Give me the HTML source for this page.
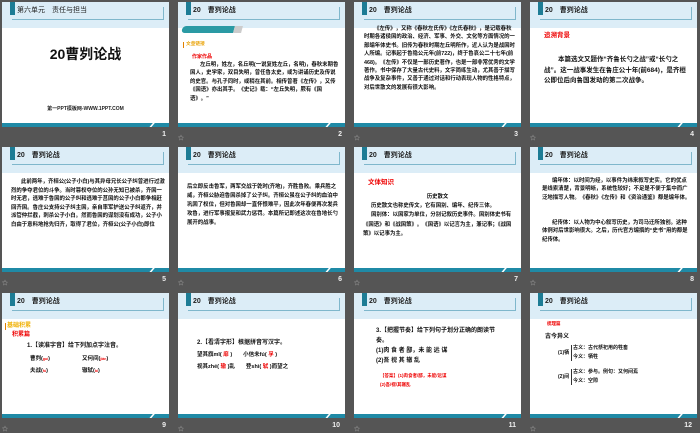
<!DOCTYPE html>
<html><head><meta charset="utf-8">
<style>
*{margin:0;padding:0;box-sizing:border-box}
body{width:700px;height:431px;background:#555;position:relative;overflow:hidden;font-family:"Liberation Sans","Noto Sans CJK SC",sans-serif}
.s{position:absolute;width:167px;height:125px;background:#fff;overflow:hidden}
.hd{position:absolute;left:0;top:0;width:167px;height:26px;background:#dcedf7}
.hl{position:absolute;left:10px;top:5px;width:152px;height:13px;border-bottom:1px solid #7fb7cc;border-right:1px solid #7fb7cc}
.sq{position:absolute;left:8px;top:0;width:5px;height:13px;background:#1d7c95}
.tt{position:absolute;left:15px;top:3px;font-size:7px;font-weight:bold;color:#222;white-space:nowrap}
.bb{position:absolute;left:0;top:121px;width:167px;height:4px;background:#1f8aa6}
.sl{position:absolute;left:150px;top:119px;width:2px;height:6px;background:#fff;transform:skewX(-40deg)}
.n{position:absolute;font-size:7px;color:#eee;font-weight:bold;text-align:right;width:20px}
.ic{position:absolute;font-size:6px;color:#bbb}
.p{position:absolute;font-size:5.4px;line-height:8.4px;color:#111;font-weight:bold;font-family:"Liberation Sans","Noto Sans CJK SC",sans-serif}
.red{color:#e00}
</style></head><body>

<!-- slide 1 -->
<div class="s" style="left:2px;top:2px">
<div class="hd"></div><div class="hl"></div><div class="sq"></div>
<div class="tt" style="font-weight:normal">第六单元　责任与担当</div>
<div style="position:absolute;left:0;width:167px;top:42px;text-align:center;font-size:14px;font-weight:bold;color:#111">20曹刿论战</div>
<div style="position:absolute;left:0;width:167px;top:103px;text-align:center;font-size:5px;font-weight:bold;color:#222">第一PPT模板网-WWW.1PPT.COM</div>
<div class="bb"></div><div class="sl"></div></div>
<div class="n" style="left:146px;top:131px">1</div>

<!-- slide 2 -->
<div class="s" style="left:178px;top:2px">
<div class="hd"></div><div class="hl"></div><div class="sq"></div><div class="tt">20　曹刿论战</div>
<div style="position:absolute;left:4px;top:24px;width:52px;height:7px;background:#2a9aa4;border-radius:4px 0 0 4px;transform:skewX(-15deg)"></div>
<div style="position:absolute;left:56px;top:24px;width:8px;height:7px;background:#ccc;transform:skewX(-15deg)"></div>
<div style="position:absolute;left:5px;top:40px;width:1px;height:6px;background:#e08000"></div>
<div class="p" style="left:8px;top:38px;color:#e8a000;font-size:4.7px">文章链接</div>
<div class="p red" style="left:14px;top:51px;font-size:5px">作家作品</div>
<div class="p" style="left:12px;top:59px;width:150px;text-indent:10px">左丘明，姓左，名丘明(一说复姓左丘，名明)，春秋末期鲁国人，史学家，双目失明，曾任鲁太史，或为讲诵历史及传说的史官。与孔子同时，或稍在其前。相传曾著《左传》，又传《国语》亦出其手。《史记》载：“左丘失明，厥有《国语》。”</div>
<div class="bb"></div><div class="sl"></div></div>
<div class="ic" style="left:178px;top:133px">☆</div><div class="n" style="left:322px;top:131px">2</div>

<!-- slide 3 -->
<div class="s" style="left:354px;top:2px">
<div class="hd"></div><div class="hl"></div><div class="sq"></div><div class="tt">20　曹刿论战</div>
<div class="p" style="left:10px;top:23px;width:152px;text-indent:10px">《左传》，又称《春秋左氏传》《左氏春秋》，是记载春秋时期各诸侯国的政治、经济、军事、外交、文化等方面情况的一部编年体史书。旧传为春秋时期左丘明所作，近人认为是战国时人所编。记事起于鲁隐公元年(前722)，终于鲁哀公二十七年(前468)。《左传》不仅是一部历史著作，也是一部非常优秀的文学著作。书中保存了大量古代史料，文字简练生动，尤其善于描写战争及复杂事件，又善于通过对话和行动表现人物的性格特点，对后世散文的发展有很大影响。</div>
<div class="bb"></div><div class="sl"></div></div>
<div class="ic" style="left:354px;top:133px">☆</div><div class="n" style="left:498px;top:131px">3</div>

<!-- slide 4 -->
<div class="s" style="left:530px;top:2px">
<div class="hd"></div><div class="hl"></div><div class="sq"></div><div class="tt">20　曹刿论战</div>
<div class="p red" style="left:14px;top:30px;font-size:6.5px">追溯背景</div>
<div class="p" style="left:14px;top:53px;width:142px;font-size:6.5px;line-height:10.5px;text-indent:14px">本篇选文又题作“齐鲁长勺之战”或“长勺之战”。这一战事发生在鲁庄公十年(前684)，是齐桓公即位后向鲁国发动的第二次战争。</div>
<div class="bb"></div><div class="sl"></div></div>
<div class="ic" style="left:530px;top:133px">☆</div><div class="n" style="left:674px;top:131px">4</div>

<!-- slide 5 -->
<div class="s" style="left:2px;top:147px">
<div class="hd"></div><div class="hl"></div><div class="sq"></div><div class="tt">20　曹刿论战</div>
<div class="p" style="left:9px;top:31px;width:154px;text-indent:10px;line-height:8.6px">此前两年，齐桓公(公子小白)与其异母兄长公子纠曾进行过激烈的争夺君位的斗争。当时篡权夺位的公孙无知已被杀，齐国一时无君，逃难于鲁国的公子纠和逃难于莒国的公子小白都争相赶回齐国。鲁庄公支持公子纠主国，亲自率军护送公子纠返齐，并派管仲拦截，刺杀公子小白。然而鲁国的谋划没有成功，公子小白由于意料地抢先归齐，取得了君位，齐桓公(公子小白)即位</div>
<div class="bb"></div><div class="sl"></div></div>
<div class="ic" style="left:2px;top:278px">☆</div><div class="n" style="left:146px;top:276px">5</div>

<!-- slide 6 -->
<div class="s" style="left:178px;top:147px">
<div class="hd"></div><div class="hl"></div><div class="sq"></div><div class="tt">20　曹刿论战</div>
<div class="p" style="left:9px;top:36px;width:154px;line-height:9px">后立即反击鲁军，两军交战于乾时(齐地)，齐胜鲁败。乘兵胜之威，齐桓公胁迫鲁国杀掉了公子纠。齐桓公虽在公子纠的血泊中巩固了权位，但对鲁国却一直怀恨难平，因此次年春便再次发兵攻鲁，进行军事报复和武力惩罚。本篇所记即述这次在鲁地长勺展开的战事。</div>
<div class="bb"></div><div class="sl"></div></div>
<div class="ic" style="left:178px;top:278px">☆</div><div class="n" style="left:322px;top:276px">6</div>

<!-- slide 7 -->
<div class="s" style="left:354px;top:147px">
<div class="hd"></div><div class="hl"></div><div class="sq"></div><div class="tt">20　曹刿论战</div>
<div class="p red" style="left:14px;top:32px;font-size:6.5px">文体知识</div>
<div class="p" style="left:0;width:167px;top:46px;text-align:center">历史散文</div>
<div class="p" style="left:9px;top:55px;width:152px;text-indent:8px;line-height:9.5px">历史散文也称史传文，它有国别、编年、纪传三体。</div>
<div class="p" style="left:9px;top:64px;width:152px;text-indent:8px;line-height:9.5px">国别体：以国家为单位，分别记叙历史事件。国别体史书有《国语》和《战国策》。《国语》以记言为主，兼记事；《战国策》以记事为主。</div>
<div class="bb"></div><div class="sl"></div></div>
<div class="ic" style="left:354px;top:278px">☆</div><div class="n" style="left:498px;top:276px">7</div>

<!-- slide 8 -->
<div class="s" style="left:530px;top:147px">
<div class="hd"></div><div class="hl"></div><div class="sq"></div><div class="tt">20　曹刿论战</div>
<div class="p" style="left:12px;top:30px;width:150px;text-indent:10px">编年体：以时间为经，以事件为纬来叙写史实。它的优点是线索清楚，背景明晰，系统性较好；不足是不便于集中而广泛地描写人物。《春秋》《左传》和《资治通鉴》都是编年体。</div>
<div class="p" style="left:12px;top:72px;width:150px;text-indent:10px">纪传体：以人物为中心叙写历史，为司马迁所独创。这种体例对后世影响很大。之后，历代官方编撰的“史书”用的都是纪传体。</div>
<div class="bb"></div><div class="sl"></div></div>
<div class="ic" style="left:530px;top:278px">☆</div><div class="n" style="left:674px;top:276px">8</div>

<!-- slide 9 -->
<div class="s" style="left:2px;top:293px">
<div class="hd"></div><div class="hl"></div><div class="sq"></div><div class="tt">20　曹刿论战</div>
<div style="position:absolute;left:3px;top:30px;width:1px;height:7px;background:#e08000"></div>
<div class="p" style="left:5px;top:29px;color:#f0b000;font-size:6px">基础积累</div>
<div class="p red" style="left:10px;top:38px;font-size:6px">积累篇</div>
<div class="p" style="left:25px;top:49px;font-size:6px">1.【读准字音】给下列加点字注音。</div>
<div class="p" style="left:28px;top:62px;font-size:5.5px">曹刿(<span class="red" style="font-size:3.5px">guì</span>)</div>
<div class="p" style="left:80px;top:62px;font-size:5.5px">又何间(<span class="red" style="font-size:3.5px">jiàn</span>)</div>
<div class="p" style="left:28px;top:74px;font-size:5.5px">夫战(<span class="red" style="font-size:3.5px">fú</span>)</div>
<div class="p" style="left:80px;top:74px;font-size:5.5px">辙轼(<span class="red" style="font-size:3.5px">bǐ</span>)</div>
<div class="bb"></div><div class="sl"></div></div>
<div class="ic" style="left:2px;top:424px">☆</div><div class="n" style="left:146px;top:422px">9</div>

<!-- slide 10 -->
<div class="s" style="left:178px;top:293px">
<div class="hd"></div><div class="hl"></div><div class="sq"></div><div class="tt">20　曹刿论战</div>
<div class="p" style="left:19px;top:46px;font-size:6px">2.【看清字形】根据拼音写汉字。</div>
<div class="p" style="left:19px;top:58px;font-size:5.5px">望其旗mǐ( <span class="red">靡</span> )　　小信未fú( <span class="red">孚</span> )</div>
<div class="p" style="left:19px;top:70px;font-size:5.5px">视其zhé( <span class="red">辙</span> )乱　　登shì( <span class="red">轼</span> )而望之</div>
<div class="bb"></div><div class="sl"></div></div>
<div class="ic" style="left:178px;top:424px">☆</div><div class="n" style="left:320px;top:422px">10</div>

<!-- slide 11 -->
<div class="s" style="left:354px;top:293px">
<div class="hd"></div><div class="hl"></div><div class="sq"></div><div class="tt">20　曹刿论战</div>
<div class="p" style="left:22px;top:33px;width:130px;font-size:6px;line-height:10px">3.【把握节奏】给下列句子划分正确的朗读节奏。<br>(1)肉 食 者 鄙，未 能 远 谋<br>(2)吾 视 其 辙 乱</div>
<div class="p red" style="left:26px;top:78px;font-size:4.5px;line-height:9px">【答案】(1)肉食者/鄙，未能/远谋<br>(2)吾/视/其辙乱</div>
<div class="bb"></div><div class="sl"></div></div>
<div class="ic" style="left:354px;top:424px">☆</div><div class="n" style="left:496px;top:422px">11</div>

<!-- slide 12 -->
<div class="s" style="left:530px;top:293px">
<div class="hd"></div><div class="hl"></div><div class="sq"></div><div class="tt">20　曹刿论战</div>
<div class="p red" style="left:17px;top:27px;font-size:4.5px">梳理篇</div>
<div class="p" style="left:15px;top:40px;font-size:6px">古今异义</div>
<div class="p" style="left:28px;top:56px;font-size:5px">(1)牺</div>
<div style="position:absolute;left:41px;top:52px;width:1px;height:16px;background:#333"></div>
<div class="p" style="left:43px;top:51px;font-size:5px;line-height:9px">古义：古代祭祀用的牲畜<br>今义：牺牲</div>
<div class="p" style="left:28px;top:80px;font-size:5px">(2)间</div>
<div style="position:absolute;left:41px;top:76px;width:1px;height:16px;background:#333"></div>
<div class="p" style="left:43px;top:75px;font-size:5px;line-height:9px">古义：参与。例句：又何间焉<br>今义：空隙</div>
<div class="bb"></div><div class="sl"></div></div>
<div class="ic" style="left:530px;top:424px">☆</div><div class="n" style="left:672px;top:422px">12</div>

</body></html>
